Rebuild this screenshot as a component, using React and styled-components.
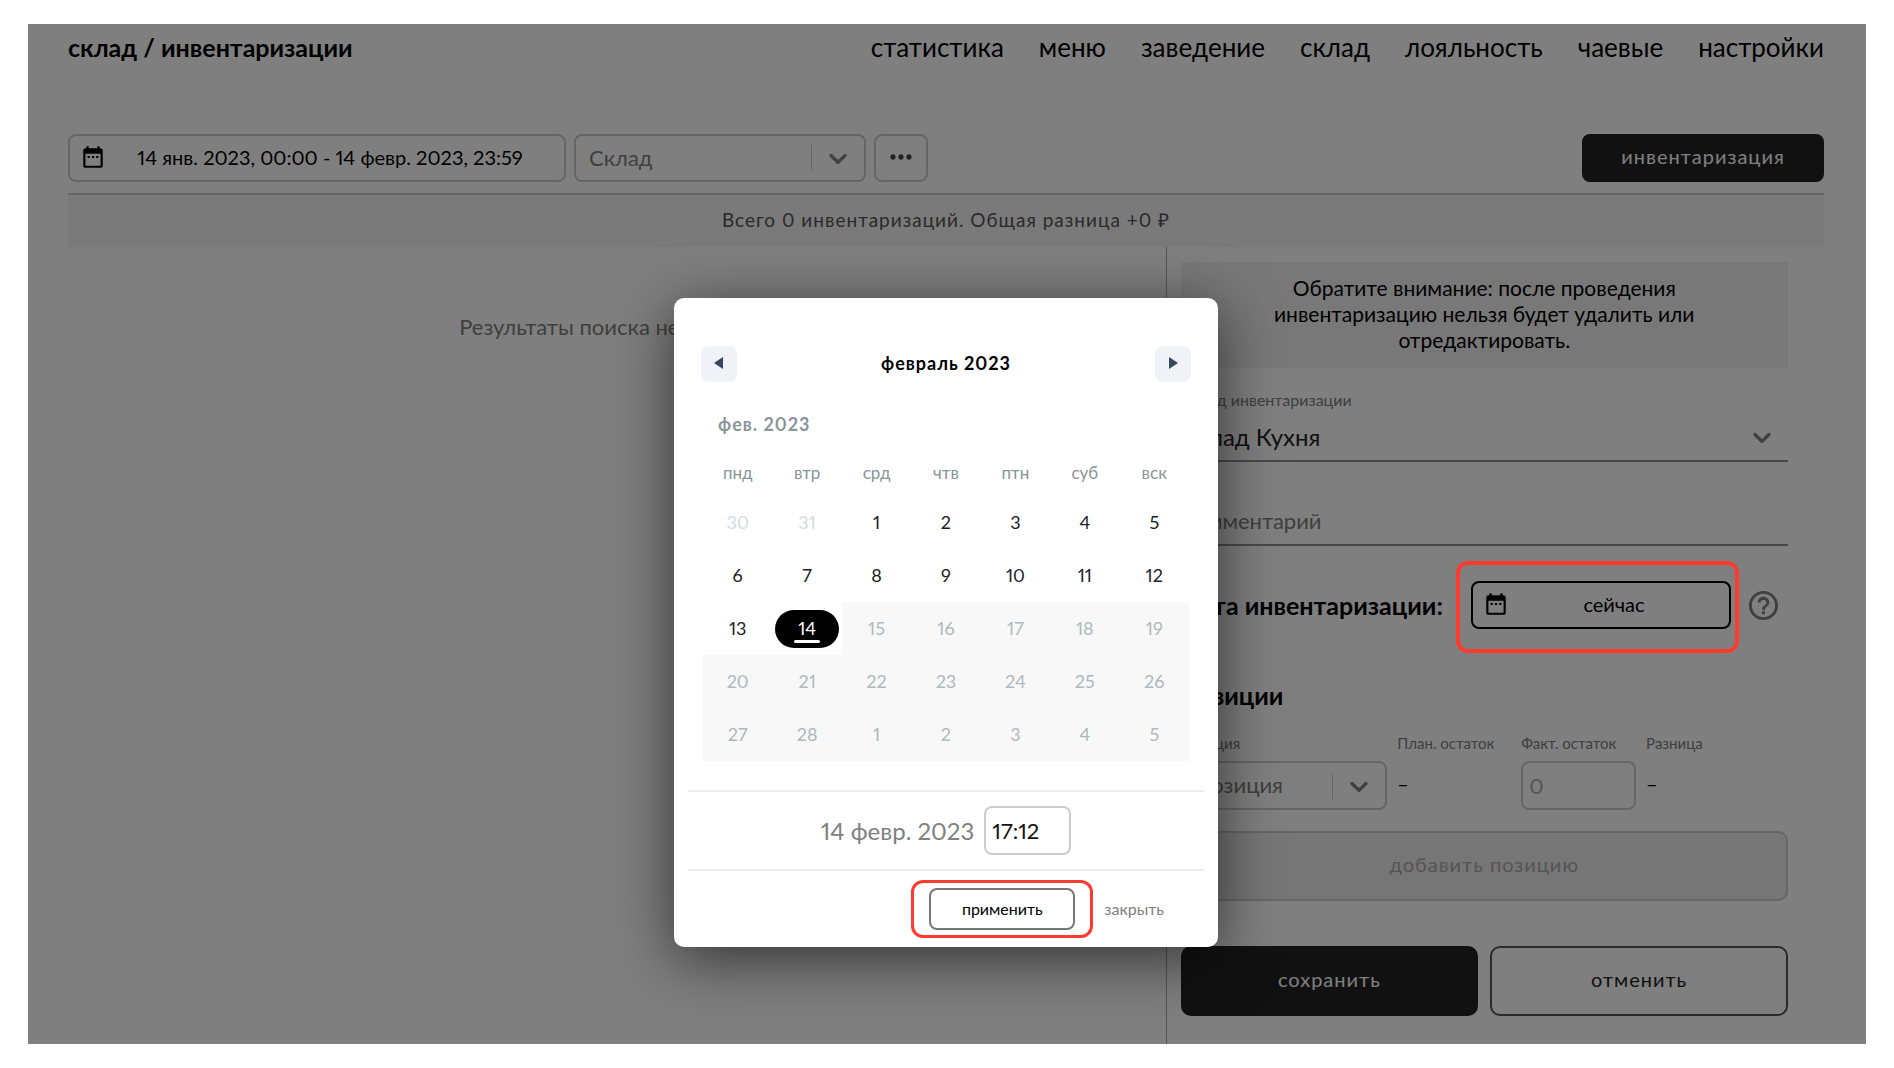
import React from "react";
import styled, { createGlobalStyle } from "styled-components";
import { MdDateRange, MdHelpOutline, MdMoreHoriz } from "react-icons/md";

const GlobalStyle = createGlobalStyle`
  * {
    box-sizing: border-box;
  }

  body {
    margin: 0;
    background: #fff;
    color: #000;
    font-family: Lato, "Liberation Sans", sans-serif;
    font-size: 20px;
    font-variant-numeric: proportional-nums;
  }

  button,
  input,
  select {
    margin: 0;
    color: inherit;
    font: inherit;
    font-variant-numeric: inherit;
  }

  button {
    cursor: pointer;
  }
`;

const Page = styled.div`
  padding: 24px 28px 25px;
`;

const Screen = styled.div`
  position: relative;
  padding: 0 42px 0 40px;
  background: #fff;
`;

const Header = styled.header`
  display: flex;
  align-items: center;
  justify-content: space-between;
  height: 46px;
`;

const Title = styled.h1`
  margin: 0;
  font-size: 25px;
  line-height: 28px;
`;

const Nav = styled.nav`
  display: flex;
  gap: 35px;

  a {
    color: inherit;
    font-size: 26px;
    line-height: 28px;
    text-decoration: none;
  }
`;

const Toolbar = styled.div`
  display: flex;
  align-items: center;
  gap: 8px;
  padding: 64px 0 11px;
  border-bottom: 2px solid #ccc;
`;

const OutlineButton = styled.button`
  display: flex;
  align-items: center;
  justify-content: center;
  width: ${(p) => p.$width};
  height: 48px;
  padding: 0 ${(p) => (p.$icon ? "10px" : "0")} 2px;
  border: ${(p) => (p.$strong ? "2px solid #000" : "2px solid #ccc")};
  border-radius: 8px;
  background: none;

  span {
    flex: 1;
    text-align: center;
  }

  svg {
    flex: none;
  }
`;

const DarkButton = styled.button`
  width: 242px;
  height: 48px;
  margin-left: auto;
  padding: 0 0 4px;
  border: 0;
  border-radius: 8px;
  background: #222;
  color: #fff;
  letter-spacing: 1px;
`;

const SelectBox = styled.div`
  display: grid;
  align-items: center;
  width: ${(p) => p.$width};
  height: ${(p) => p.$height};
  padding-top: ${(p) => (p.$line ? "4px" : "0")};
  border: solid ${(p) => (p.$line ? "#909090" : "#ccc")};
  border-width: ${(p) => (p.$line ? "0 0 2px" : "2px")};
  border-radius: ${(p) => (p.$line ? "0" : "8px")};

  select,
  > span {
    grid-area: 1 / 1;
  }

  select {
    width: 100%;
    height: 100%;
    padding: 0 0 2px ${(p) => (p.$line ? "0" : "13px")};
    border: 0;
    background: none;
    color: ${(p) => (p.$line ? "#222" : "#808080")};
    font-size: ${(p) => (p.$line ? "24px" : "22px")};
    appearance: none;
  }
`;

const Arrow = styled.span`
  display: flex;
  align-items: center;
  justify-self: end;
  height: 26px;
  padding: 0 11px;
  border-left: ${(p) => (p.$line ? "0" : "1px solid #ccc")};
  color: #808080;
  pointer-events: none;
`;

const Summary = styled.div`
  height: 52px;
  background: #f4f4f4;
  color: #555;
  font-size: 19px;
  line-height: 50px;
  letter-spacing: 1px;
  text-align: center;
`;

const Columns = styled.main`
  display: grid;
  grid-template-columns: minmax(0, 5fr) minmax(0, 3fr);
`;

const Results = styled.section`
  padding-top: 65px;
  color: #808080;
  font-size: 22px;
  line-height: 30px;
  text-align: center;
`;

const Panel = styled.form`
  display: flex;
  flex-direction: column;
  padding: 15px 36px 28px 14px;
  border-left: 1px solid #aaa;
`;

const Notice = styled.p`
  margin: 0;
  padding: 13px 80px 15px;
  background: #f0f0f0;
  font-size: 21px;
  line-height: 26px;
  text-align: center;
`;

const Label = styled.label`
  margin-top: 22px;
  color: #808080;
  font-size: 16px;
  line-height: 20px;
`;

const CommentInput = styled.input`
  height: 48px;
  margin-top: 36px;
  padding: 0 0 2px;
  border: 0;
  border-bottom: 2px solid #909090;
  background: none;
  font-size: 22px;

  &::placeholder {
    color: #808080;
    opacity: 1;
  }
`;

const DateRow = styled.div`
  display: flex;
  align-items: center;
  gap: 15px;
  margin-top: 35px;
  padding-right: 7px;
`;

const Subtitle = styled.h2`
  flex: 1;
  margin: ${(p) => (p.$spaced ? "52px 0 0" : "0")};
  font-size: 25px;
  line-height: 28px;
  white-space: nowrap;
`;

const HelpButton = styled.button`
  display: flex;
  padding: 0;
  border: 0;
  background: none;
  color: #808080;
`;

/* red frame pointing at a control, drawn above the dimmed page */
const Highlight = styled.div`
  position: relative;

  &::after {
    content: "";
    position: absolute;
    z-index: 2;
    inset: ${(p) => p.$inset};
    border: ${(p) => p.$thickness || "3px"} solid #ff3b2f;
    border-radius: 12px;
    pointer-events: none;
  }
`;

const Position = styled.div`
  display: grid;
  grid-template-columns:
    minmax(0, 207fr) minmax(0, 114fr) minmax(0, 115fr)
    minmax(0, 142fr);
  gap: 8px 10px;
  margin-top: 24px;

  label,
  > span {
    color: #808080;
    font-size: 15px;
    line-height: 20px;
    white-space: nowrap;
  }

  output {
    line-height: 44px;
  }
`;

const TextInput = styled.input`
  width: ${(p) => p.$width};
  height: 49px;
  padding: 0 6px;
  border: 2px solid #ccc;
  border-radius: 8px;
  background: none;
  font-size: 22px;

  &::placeholder {
    color: #aaa;
    opacity: 1;
  }
`;

const WideButton = styled.button`
  flex: 1;
  height: 70px;
  padding: 0 0 4px;
  border: 2px solid ${(p) => (p.$primary ? "#222" : "#555")};
  border-radius: 10px;
  background: ${(p) => (p.$primary ? "#222" : "none")};
  color: ${(p) => (p.$primary ? "#fff" : "#222")};
  letter-spacing: 1px;

  &:disabled {
    flex: none;
    margin-top: 21px;
    border-color: #ccc;
    background: #ececec;
    color: #aaa;
  }
`;

const FormActions = styled.div`
  display: flex;
  gap: 12px;
  margin-top: 45px;
`;

const Overlay = styled.div`
  position: absolute;
  z-index: 1;
  inset: 0;
  background: rgba(0, 0, 0, 0.5);
`;

const ModalLayer = styled.div`
  position: absolute;
  z-index: 3;
  inset: 0;
  display: flex;
  align-items: flex-start;
  justify-content: center;
  padding: 274px 2px 0 0;
`;

const Modal = styled.div`
  width: 544px;
  padding: 48px 14px 0;
  border-radius: 10px;
  background: #fff;
  box-shadow: 0 12px 60px rgba(0, 0, 0, 0.6);
`;

const MonthBar = styled.div`
  display: flex;
  align-items: center;
  justify-content: space-between;
  padding: 0 13px;
  font-size: 18px;
  letter-spacing: 1px;

  strong {
    padding-bottom: 2px;
  }
`;

const MonthButton = styled.button`
  display: flex;
  align-items: center;
  justify-content: center;
  width: 36px;
  height: 36px;
  padding: 0 0 2px;
  border: 0;
  border-radius: 8px;
  background: #f0f2f7;
  color: #34495e;
`;

const Calendar = styled.table`
  width: 486px;
  margin: 32px auto 0;
  border-collapse: collapse;
  table-layout: fixed;

  caption {
    padding: 0 0 14px 15px;
    color: #8a9599;
    font-size: 18px;
    font-weight: bold;
    line-height: 20px;
    letter-spacing: 1px;
    text-align: left;
  }

  th {
    height: 48px;
    padding: 0;
    color: #8a9599;
    font-size: 17px;
    font-weight: normal;
  }
`;

const Cell = styled.td`
  height: 53px;
  padding: 0;
  background: ${(p) => (p.$off ? "#f8f8f8" : "none")};
`;

const Day = styled.button`
  display: flex;
  flex-direction: column;
  align-items: center;
  justify-content: center;
  width: 64px;
  height: 38px;
  margin: 0 auto;
  padding: 0 0 2px;
  border: 0;
  border-radius: 19px;
  background: ${(p) => (p.$selected ? "#000" : "none")};
  color: ${(p) => (p.$selected ? "#fff" : p.$faded ? "#d5dbde" : "#1c2126")};
  font-size: 18px;
  line-height: 20px;

  &:disabled {
    color: #aeb8bd;
  }

  &::after {
    content: "";
    display: ${(p) => (p.$selected ? "block" : "none")};
    width: 26px;
    height: 3px;
    margin-top: 2px;
    margin-bottom: -5px;
    border-radius: 2px;
    background: #fff;
  }
`;

const TimeRow = styled.div`
  display: flex;
  align-items: center;
  justify-content: center;
  gap: 10px;
  height: 81px;
  margin-top: 29px;
  border: solid #ececec;
  border-width: 2px 0;
  color: #808080;
  font-size: 24px;

  input {
    color: #111;
  }
`;

const ModalActions = styled.div`
  display: flex;
  align-items: center;
  justify-content: flex-end;
  gap: 29px;
  height: 76px;
  padding-right: 40px;
  font-size: 16px;
`;

const ApplyButton = styled.button`
  width: 146px;
  height: 42px;
  padding: 0 0 2px;
  border: 2px solid #777;
  border-radius: 8px;
  background: none;
`;

const CloseButton = styled.button`
  padding: 0 0 2px;
  border: 0;
  background: none;
  color: #808080;
`;

const links = [
  "статистика",
  "меню",
  "заведение",
  "склад",
  "лояльность",
  "чаевые",
  "настройки",
];

const weekdays = ["пнд", "втр", "срд", "чтв", "птн", "суб", "вск"];

const weeks = [
  [30, 31, 1, 2, 3, 4, 5],
  [6, 7, 8, 9, 10, 11, 12],
  [13, 14, 15, 16, 17, 18, 19],
  [20, 21, 22, 23, 24, 25, 26],
  [27, 28, 1, 2, 3, 4, 5],
];

const TODAY = 15; // index of february 14 in the grid

const Chevron = ({ line }) => (
  <Arrow $line={line}>
    <svg width="30" height="30" viewBox="0 0 20 20" fill="currentColor">
      <path d="M4.516 7.548c0.436-0.446 1.043-0.481 1.576 0l3.908 3.747 3.908-3.747c0.533-0.481 1.141-0.446 1.574 0 0.436 0.445 0.408 1.197 0 1.615-0.406 0.418-4.695 4.502-4.695 4.502-0.217 0.223-0.502 0.335-0.787 0.335s-0.57-0.112-0.789-0.335c0 0-4.287-4.084-4.695-4.502s-0.436-1.17 0-1.615z" />
    </svg>
  </Arrow>
);

const InventoryForm = () => (
  <Panel onSubmit={(e) => e.preventDefault()}>
    <Notice>
      Обратите внимание: после проведения инвентаризацию нельзя будет удалить
      или отредактировать.
    </Notice>
    <Label htmlFor="store">Склад инвентаризации</Label>
    <SelectBox $line $height="52px">
      <select id="store">
        <option>Склад Кухня</option>
      </select>
      <Chevron line />
    </SelectBox>
    <CommentInput placeholder="Комментарий" aria-label="Комментарий" />
    <DateRow>
      <Subtitle>Дата инвентаризации:</Subtitle>
      <Highlight $inset="-20px -8px -24px -15px" $thickness="4px">
        <OutlineButton type="button" $width="260px" $icon $strong>
          <MdDateRange size={26} />
          <span>сейчас</span>
        </OutlineButton>
      </Highlight>
      <HelpButton type="button" aria-label="Помощь">
        <MdHelpOutline size={35} />
      </HelpButton>
    </DateRow>
    <Subtitle $spaced>Позиции</Subtitle>
    <Position>
      <label htmlFor="item">Позиция</label>
      <span>План. остаток</span>
      <label htmlFor="fact">Факт. остаток</label>
      <span>Разница</span>
      <SelectBox $height="49px">
        <select id="item">
          <option>Позиция</option>
        </select>
        <Chevron />
      </SelectBox>
      <output>–</output>
      <TextInput id="fact" $width="100%" placeholder="0" />
      <output>–</output>
    </Position>
    <WideButton type="button" disabled>
      добавить позицию
    </WideButton>
    <FormActions>
      <WideButton $primary>сохранить</WideButton>
      <WideButton type="button">отменить</WideButton>
    </FormActions>
  </Panel>
);

const DateModal = () => (
  <ModalLayer>
    <Modal role="dialog" aria-label="Дата инвентаризации">
      <MonthBar>
        <MonthButton aria-label="Предыдущий месяц">
          <svg width="10" height="12" viewBox="0 0 10 12" fill="currentColor">
            <path d="M9 0v12L0 6z" />
          </svg>
        </MonthButton>
        <strong>февраль 2023</strong>
        <MonthButton aria-label="Следующий месяц">
          <svg width="10" height="12" viewBox="0 0 10 12" fill="currentColor">
            <path d="M1 0v12l9-6z" />
          </svg>
        </MonthButton>
      </MonthBar>
      <Calendar>
        <caption>фев. 2023</caption>
        <thead>
          <tr>
            {weekdays.map((name) => (
              <th key={name}>{name}</th>
            ))}
          </tr>
        </thead>
        <tbody>
          {weeks.map((week, row) => (
            <tr key={row}>
              {week.map((day, col) => {
                const index = row * 7 + col;
                return (
                  <Cell key={col} $off={index > TODAY}>
                    <Day
                      $selected={index === TODAY}
                      $faded={index < 2}
                      disabled={index > TODAY}
                    >
                      {day}
                    </Day>
                  </Cell>
                );
              })}
            </tr>
          ))}
        </tbody>
      </Calendar>
      <TimeRow>
        <label htmlFor="time">14 февр. 2023</label>
        <TextInput id="time" $width="87px" defaultValue="17:12" />
      </TimeRow>
      <ModalActions>
        <Highlight $inset="-8px -18px">
          <ApplyButton>применить</ApplyButton>
        </Highlight>
        <CloseButton>закрыть</CloseButton>
      </ModalActions>
    </Modal>
  </ModalLayer>
);

export default function App() {
  return (
    <Page>
      <GlobalStyle />
      <Screen>
        <Header>
          <Title>склад / инвентаризации</Title>
          <Nav>
            {links.map((name) => (
              <a key={name} href="#">
                {name}
              </a>
            ))}
          </Nav>
        </Header>
        <Toolbar>
          <OutlineButton $width="498px" $icon>
            <MdDateRange size={26} />
            <span>14 янв. 2023, 00:00 - 14 февр. 2023, 23:59</span>
          </OutlineButton>
          <SelectBox $width="292px" $height="48px">
            <select aria-label="Склад">
              <option>Склад</option>
            </select>
            <Chevron />
          </SelectBox>
          <OutlineButton $width="54px" aria-label="Ещё">
            <MdMoreHoriz size={32} color="#444" />
          </OutlineButton>
          <DarkButton>инвентаризация</DarkButton>
        </Toolbar>
        <Summary>Всего 0 инвентаризаций. Общая разница +0 ₽</Summary>
        <Columns>
          <Results>Результаты поиска не найдены</Results>
          <InventoryForm />
        </Columns>
        <Overlay />
        <DateModal />
      </Screen>
    </Page>
  );
}
